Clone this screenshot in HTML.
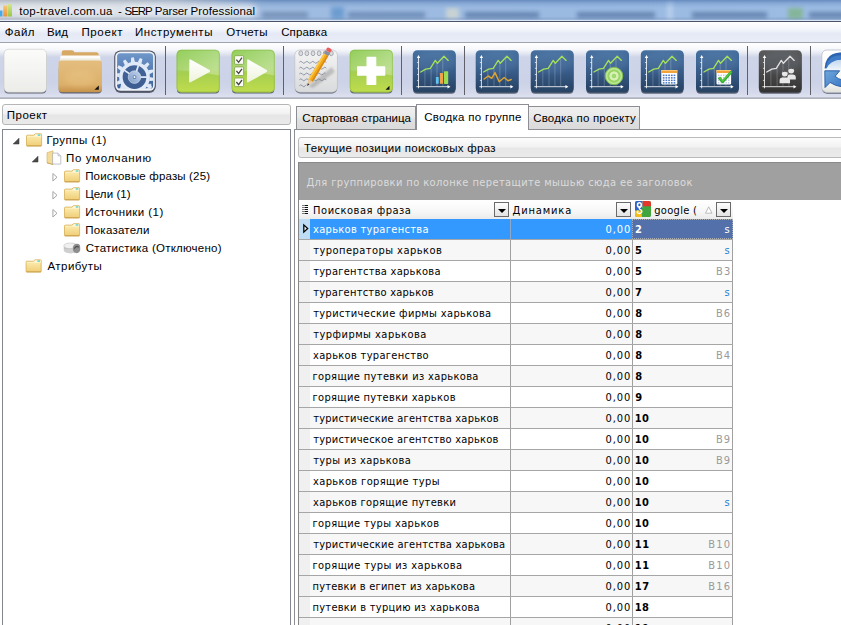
<!DOCTYPE html>
<html lang="ru"><head><meta charset="utf-8"><title>SERP Parser Professional</title>
<style>
html,body{margin:0;padding:0}
body{width:841px;height:625px;overflow:hidden;background:#fff;position:relative;font-family:'Liberation Sans',sans-serif;font-size:12px}
.a{position:absolute}
.t{position:absolute;white-space:pre;line-height:16px;height:16px;font-size:11.5px}
.d{font-family:'DejaVu Sans Condensed','DejaVu Sans','Liberation Sans',sans-serif;font-stretch:condensed;font-size:11px}
svg{position:absolute;overflow:visible}
.sep{position:absolute;top:46px;width:1px;height:49px;background:#5f6068}
</style></head>
<body>
<div class="a" id="title" style="left:0;top:0;width:841px;height:21px;overflow:hidden;background:linear-gradient(90deg,#c3c9d2 0,#bfc8d4 120px,#b1c1d8 200px,#9fbbe0 262px,#9bbae2 560px,#9dbce3 841px)">
<div class="a" style="left:-20px;top:3px;width:276px;height:14px;border-radius:8px;background:#eef1f5;opacity:.7;filter:blur(3.5px)"></div>
<div class="a" style="left:262px;top:12px;width:46px;height:6px;background:#5d789e;opacity:0.6;filter:blur(2px)"></div>
<div class="a" style="left:331px;top:7px;width:13px;height:12px;background:#4d8ac6;opacity:0.6;filter:blur(2px)"></div>
<div class="a" style="left:348px;top:12px;width:77px;height:6px;background:#52729e;opacity:0.6;filter:blur(2px)"></div>
<div class="a" style="left:446px;top:8px;width:13px;height:11px;background:#e6e2cc;opacity:0.6;filter:blur(2px)"></div>
<div class="a" style="left:465px;top:12px;width:74px;height:6px;background:#4a6a98;opacity:0.65;filter:blur(2px)"></div>
<div class="a" style="left:577px;top:12px;width:78px;height:6px;background:#4a6a98;opacity:0.65;filter:blur(2px)"></div>
<div class="a" style="left:667px;top:0px;width:6px;height:21px;background:#cfe0f6;opacity:0.5;filter:blur(2px)"></div>
<div class="a" style="left:692px;top:12px;width:75px;height:6px;background:#4a6a98;opacity:0.65;filter:blur(2px)"></div>
<div class="a" style="left:788px;top:8px;width:15px;height:11px;background:#7fb487;opacity:0.8;filter:blur(2px)"></div>
<div class="a" style="left:809px;top:12px;width:40px;height:6px;background:#4a6a98;opacity:0.65;filter:blur(2px)"></div>
<div class="a" style="left:0;top:0;width:841px;height:21px;background:linear-gradient(180deg,rgba(70,80,100,.16) 0,rgba(70,80,100,.06) 12%,rgba(255,255,255,0) 26%,rgba(255,255,255,0) 78%,rgba(40,60,100,.14) 92%,rgba(238,244,255,.7) 96%,rgba(238,244,255,.8) 100%)"></div>
<div class="a" style="left:170px;top:0;width:671px;height:8px;-webkit-mask-image:linear-gradient(90deg,transparent 0,#000 100px);mask-image:linear-gradient(90deg,transparent 0,#000 100px);background:linear-gradient(180deg,rgba(50,100,170,.42) 0,rgba(60,110,180,.2) 40%,rgba(60,110,180,0) 100%)"></div>
</div>
<svg style="left:0;top:3px" width="14" height="16" viewBox="0 3 14 16"><defs><linearGradient id="bo" x1="0" y1="0" x2="0" y2="1"><stop offset="0" stop-color="#f8c874"/><stop offset="1" stop-color="#e8943a"/></linearGradient><linearGradient id="bg" x1="0" y1="0" x2="0" y2="1"><stop offset="0" stop-color="#d2e88e"/><stop offset="1" stop-color="#9cc44a"/></linearGradient></defs><rect x="-1" y="10.5" width="3.5" height="6" fill="#4ea6e2"/><rect x="3.2" y="5.5" width="4.3" height="11" rx=".6" fill="url(#bo)"/><rect x="8" y="4" width="4" height="12.5" rx=".6" fill="url(#bg)"/></svg>
<span class="t" style="left:19.2px;top:3px;color:#000;letter-spacing:0.28px;text-shadow:0 0 4px rgba(255,255,255,.9),0 0 9px rgba(255,255,255,.8);">top-travel.com.ua</span>
<span class="t" style="left:117.9px;top:3px;color:#000;text-shadow:0 0 4px rgba(255,255,255,.9),0 0 9px rgba(255,255,255,.8);">-</span>
<span class="t" style="left:124.6px;top:3px;color:#000;letter-spacing:-1.05px;text-shadow:0 0 4px rgba(255,255,255,.9),0 0 9px rgba(255,255,255,.8);">SERP</span>
<span class="t" style="left:154.8px;top:3px;color:#000;letter-spacing:-0.17px;text-shadow:0 0 4px rgba(255,255,255,.9),0 0 9px rgba(255,255,255,.8);">Parser</span>
<span class="t" style="left:190.4px;top:3px;color:#000;letter-spacing:0.13px;text-shadow:0 0 4px rgba(255,255,255,.9),0 0 9px rgba(255,255,255,.8);">Professional</span>
<div class="a" style="left:0;top:21px;width:841px;height:1px;background:#4a5468"></div>
<div class="a" style="left:0;top:22px;width:841px;height:20px;background:linear-gradient(180deg,#ffffff 0,#f4f6fb 35%,#e4e9f5 60%,#e9edf7 100%)"></div>
<span class="t" style="left:4.8px;top:24px;color:#000;letter-spacing:0.48px;">Файл</span>
<span class="t" style="left:47.0px;top:24px;color:#000;letter-spacing:0.12px;">Вид</span>
<span class="t" style="left:81.4px;top:24px;color:#000;letter-spacing:0.65px;">Проект</span>
<span class="t" style="left:135.0px;top:24px;color:#000;letter-spacing:0.57px;">Инструменты</span>
<span class="t" style="left:226.2px;top:24px;color:#000;letter-spacing:0.30px;">Отчеты</span>
<span class="t" style="left:281.2px;top:24px;color:#000;letter-spacing:0.13px;">Справка</span>
<div class="a" style="left:0;top:42px;width:841px;height:1px;background:#a0a3ad"></div>
<div class="a" style="left:0;top:43px;width:841px;height:54px;background:linear-gradient(180deg,#ffffff 0,#f6f7fb 12%,#e8ebf4 18%,#cfd5e9 26%,#ccd2e7 70%,#d3d8ea 90%,#dde1ef 100%)"></div>
<div class="a" style="left:0;top:97px;width:841px;height:1px;background:#bcc0cd"></div>
<div class="a" style="left:0;top:98px;width:841px;height:1px;background:#b0b3bf"></div>
<div class="sep" style="left:165px"></div>
<div class="sep" style="left:283px"></div>
<div class="sep" style="left:401px"></div>
<div class="sep" style="left:464px"></div>
<div class="sep" style="left:747px"></div>
<div class="sep" style="left:810px"></div>
<svg style="left:0;top:43px" width="841" height="55" viewBox="0 43 841 55">
<defs>
<linearGradient id="gW" x1="0" y1="0" x2="0" y2="1"><stop offset="0" stop-color="#fbfbfa"/><stop offset="1" stop-color="#ecece9"/></linearGradient>
<linearGradient id="gF" x1="0" y1="0" x2="0" y2="1"><stop offset="0" stop-color="#e4bd7e"/><stop offset=".75" stop-color="#dcb06a"/><stop offset="1" stop-color="#c6924a"/></linearGradient>
<linearGradient id="gG" x1="0" y1="0" x2="0" y2="1"><stop offset="0" stop-color="#90cd58"/><stop offset=".45" stop-color="#a3d264"/><stop offset=".55" stop-color="#a6cf50"/><stop offset="1" stop-color="#c0dc4c"/></linearGradient>
<linearGradient id="gGloss" x1="0" y1="0" x2="1" y2=".3"><stop offset="0" stop-color="#fff" stop-opacity=".02"/><stop offset="1" stop-color="#fff" stop-opacity=".28"/></linearGradient>
<linearGradient id="gB" x1="0" y1="0" x2="0" y2="1"><stop offset="0" stop-color="#46709f"/><stop offset=".5" stop-color="#385c89"/><stop offset=".85" stop-color="#2b486c"/><stop offset="1" stop-color="#284464"/></linearGradient>
<linearGradient id="gW2" x1="0" y1="0" x2="0" y2="1"><stop offset="0" stop-color="#ffffff"/><stop offset=".8" stop-color="#f6f6f4"/><stop offset="1" stop-color="#dedfda"/></linearGradient>
<linearGradient id="gGlass" x1="0" y1="0" x2="0" y2="1"><stop offset="0" stop-color="#9fc0e6"/><stop offset="1" stop-color="#f2f7fc"/></linearGradient>
<linearGradient id="gArr" x1="0" y1="0" x2="1" y2="1"><stop offset="0" stop-color="#6fa6dc"/><stop offset="1" stop-color="#3a78c4"/></linearGradient>
<linearGradient id="gK" x1="0" y1="0" x2="0" y2="1"><stop offset="0" stop-color="#5a5a5a"/><stop offset=".5" stop-color="#4a4a4a"/><stop offset="1" stop-color="#333"/></linearGradient>
<linearGradient id="gGear" x1="0" y1="0" x2="0" y2="1"><stop offset="0" stop-color="#6f97c9"/><stop offset="1" stop-color="#3c6099"/></linearGradient>
<linearGradient id="gHub" x1="1" y1="0" x2="0" y2="1"><stop offset="0" stop-color="#c3d4ec"/><stop offset="1" stop-color="#7f9cc8"/></linearGradient>
<linearGradient id="gTri" x1="0" y1="0" x2="0" y2="1"><stop offset="0" stop-color="#ffffff"/><stop offset="1" stop-color="#eef3dc"/></linearGradient>
<linearGradient id="gN" x1="0" y1="0" x2="0" y2="1"><stop offset="0" stop-color="#f4f4f4"/><stop offset="1" stop-color="#d9dadb"/></linearGradient>
<radialGradient id="gTarget"><stop offset="0" stop-color="#a8de78"/><stop offset=".2" stop-color="#9ad866"/><stop offset=".3" stop-color="#d6f0b8"/><stop offset=".48" stop-color="#d6f0b8"/><stop offset=".56" stop-color="#98d562"/><stop offset=".7" stop-color="#98d562"/><stop offset=".8" stop-color="#c4e99c"/><stop offset="1" stop-color="#a6dc74"/></radialGradient>
<filter id="sh2" x="-30%" y="-30%" width="160%" height="160%"><feGaussianBlur stdDeviation="2.5"/></filter>
<filter id="sh3" x="-30%" y="-30%" width="160%" height="160%"><feGaussianBlur stdDeviation="1.3"/></filter>
<filter id="sh" x="-10%" y="-10%" width="120%" height="130%"><feGaussianBlur stdDeviation=".7"/></filter>
<g id="axes"><path d="M5.7 38.3V7M3.6 36.7H35.5" stroke="#fff" stroke-width=".9" fill="none" opacity=".92"/><path d="M5.7 4.9l-1.7 3h3.4zM37.7 36.7l-3-1.7v3.4z" fill="#fff"/><path d="M12.1 36V20M18.3 36V18.5M24.2 36V13M30 36V8" stroke="#fff" stroke-width=".8" opacity=".25"/><path d="M4.2 12.5h1.5M4.2 18.3h1.5M4.2 24.5h1.5M4.2 30.4h1.5" stroke="#fff" stroke-width=".8" opacity=".85"/></g>
<path id="gline" d="M7.9 22L12.9 19.1 17.5 18.3 22.5 10.4 24.6 13.3 31.2 6.2 35.4 10.4" fill="none" stroke-width="1.35" stroke-linejoin="round" stroke-linecap="round"/>
</defs>
<rect x="4.3" y="50.5" width="41.9" height="43" rx="4" fill="#2e3446" opacity=".7" filter="url(#sh)"/>
<rect x="4" y="49.3" width="42.5" height="43" rx="4.5" fill="url(#gW)" stroke="#c9c9c6" stroke-width=".6"/>
<rect x="58.8" y="65.2" width="42.9" height="28.2" rx="4" fill="#2e3446" opacity=".7" filter="url(#sh)"/>
<path d="M61.7 56V52.5Q61.7 50.2 63.9 50.2H71.8Q73.8 50.2 74.4 52.2H96.5Q98.7 52.4 98.7 54.5V62H61.7z" fill="#d7a964"/>
<rect x="60.3" y="55.6" width="40" height="7" rx="1.6" fill="#fdfcf9"/>
<rect x="60.3" y="58.4" width="40" height="3" fill="#eeebe3"/>
<path d="M58.5 63Q58.5 60.4 61.1 60.4H99.4Q102.0 60.4 102.0 63V88.6Q102.0 92.3 98.3 92.3H62.2Q58.5 92.3 58.5 88.6z" fill="url(#gF)"/>
<ellipse cx="80.0" cy="78" rx="15" ry="8" fill="#ecc88c" opacity=".35" filter="url(#sh2)"/>
<path d="M98.8 85.4v4.4h-4.4z" fill="#111"/>
<rect x="114.6" y="51.6" width="40.9" height="41.3" rx="6" fill="#2e3446" opacity=".7" filter="url(#sh)"/>
<rect x="114.3" y="50.4" width="41.5" height="41.3" rx="6" fill="#4d5363"/>
<rect x="115.3" y="51.4" width="39.5" height="39.3" rx="5.2" fill="#eef2f8"/>
<rect x="117.1" y="53.2" width="36" height="35.8" rx="3.4" fill="url(#gGear)"/>
<clipPath id="cg"><rect x="117.1" y="53.2" width="36" height="35.8" rx="3.4"/></clipPath><g clip-path="url(#cg)">
<g transform="translate(120.3,97)"><path d="M-1.49 -8.60L-1.01 -12.80H1.01L1.49 -8.60z" fill="#d3dff1" transform="rotate(8.0)"/><path d="M-1.49 -8.60L-1.01 -12.80H1.01L1.49 -8.60z" fill="#d3dff1" transform="rotate(40.7)"/><path d="M-1.49 -8.60L-1.01 -12.80H1.01L1.49 -8.60z" fill="#d3dff1" transform="rotate(73.5)"/><path d="M-1.49 -8.60L-1.01 -12.80H1.01L1.49 -8.60z" fill="#d3dff1" transform="rotate(106.2)"/><path d="M-1.49 -8.60L-1.01 -12.80H1.01L1.49 -8.60z" fill="#d3dff1" transform="rotate(138.9)"/><path d="M-1.49 -8.60L-1.01 -12.80H1.01L1.49 -8.60z" fill="#d3dff1" transform="rotate(171.6)"/><path d="M-1.49 -8.60L-1.01 -12.80H1.01L1.49 -8.60z" fill="#d3dff1" transform="rotate(204.4)"/><path d="M-1.49 -8.60L-1.01 -12.80H1.01L1.49 -8.60z" fill="#d3dff1" transform="rotate(237.1)"/><path d="M-1.49 -8.60L-1.01 -12.80H1.01L1.49 -8.60z" fill="#d3dff1" transform="rotate(269.8)"/><path d="M-1.49 -8.60L-1.01 -12.80H1.01L1.49 -8.60z" fill="#d3dff1" transform="rotate(302.5)"/><path d="M-1.49 -8.60L-1.01 -12.80H1.01L1.49 -8.60z" fill="#d3dff1" transform="rotate(335.3)"/><circle r="8.00" fill="none" stroke="#d3dff1" stroke-width="2.00"/></g>
<g transform="translate(149.8,96.5)"><path d="M-1.49 -8.60L-1.01 -12.80H1.01L1.49 -8.60z" fill="#d3dff1" transform="rotate(2.0)"/><path d="M-1.49 -8.60L-1.01 -12.80H1.01L1.49 -8.60z" fill="#d3dff1" transform="rotate(34.7)"/><path d="M-1.49 -8.60L-1.01 -12.80H1.01L1.49 -8.60z" fill="#d3dff1" transform="rotate(67.5)"/><path d="M-1.49 -8.60L-1.01 -12.80H1.01L1.49 -8.60z" fill="#d3dff1" transform="rotate(100.2)"/><path d="M-1.49 -8.60L-1.01 -12.80H1.01L1.49 -8.60z" fill="#d3dff1" transform="rotate(132.9)"/><path d="M-1.49 -8.60L-1.01 -12.80H1.01L1.49 -8.60z" fill="#d3dff1" transform="rotate(165.6)"/><path d="M-1.49 -8.60L-1.01 -12.80H1.01L1.49 -8.60z" fill="#d3dff1" transform="rotate(198.4)"/><path d="M-1.49 -8.60L-1.01 -12.80H1.01L1.49 -8.60z" fill="#d3dff1" transform="rotate(231.1)"/><path d="M-1.49 -8.60L-1.01 -12.80H1.01L1.49 -8.60z" fill="#d3dff1" transform="rotate(263.8)"/><path d="M-1.49 -8.60L-1.01 -12.80H1.01L1.49 -8.60z" fill="#d3dff1" transform="rotate(296.5)"/><path d="M-1.49 -8.60L-1.01 -12.80H1.01L1.49 -8.60z" fill="#d3dff1" transform="rotate(329.3)"/><circle r="8.00" fill="none" stroke="#d3dff1" stroke-width="2.00"/></g>
<circle cx="134.5" cy="77.1" r="12.2" fill="#3d5d90" opacity=".8"/>
<g transform="translate(134.5,77.1)"><path d="M-2.00 -15.00L-1.36 -19.70H1.36L2.00 -15.00z" fill="#dfe9f7" transform="rotate(-6.0)"/><path d="M-2.00 -15.00L-1.36 -19.70H1.36L2.00 -15.00z" fill="#dfe9f7" transform="rotate(19.7)"/><path d="M-2.00 -15.00L-1.36 -19.70H1.36L2.00 -15.00z" fill="#dfe9f7" transform="rotate(45.4)"/><path d="M-2.00 -15.00L-1.36 -19.70H1.36L2.00 -15.00z" fill="#dfe9f7" transform="rotate(71.1)"/><path d="M-2.00 -15.00L-1.36 -19.70H1.36L2.00 -15.00z" fill="#dfe9f7" transform="rotate(96.9)"/><path d="M-2.00 -15.00L-1.36 -19.70H1.36L2.00 -15.00z" fill="#dfe9f7" transform="rotate(122.6)"/><path d="M-2.00 -15.00L-1.36 -19.70H1.36L2.00 -15.00z" fill="#dfe9f7" transform="rotate(148.3)"/><path d="M-2.00 -15.00L-1.36 -19.70H1.36L2.00 -15.00z" fill="#dfe9f7" transform="rotate(174.0)"/><path d="M-2.00 -15.00L-1.36 -19.70H1.36L2.00 -15.00z" fill="#dfe9f7" transform="rotate(199.7)"/><path d="M-2.00 -15.00L-1.36 -19.70H1.36L2.00 -15.00z" fill="#dfe9f7" transform="rotate(225.4)"/><path d="M-2.00 -15.00L-1.36 -19.70H1.36L2.00 -15.00z" fill="#dfe9f7" transform="rotate(251.1)"/><path d="M-2.00 -15.00L-1.36 -19.70H1.36L2.00 -15.00z" fill="#dfe9f7" transform="rotate(276.9)"/><path d="M-2.00 -15.00L-1.36 -19.70H1.36L2.00 -15.00z" fill="#dfe9f7" transform="rotate(302.6)"/><path d="M-2.00 -15.00L-1.36 -19.70H1.36L2.00 -15.00z" fill="#dfe9f7" transform="rotate(328.3)"/><circle r="13.65" fill="none" stroke="#dfe9f7" stroke-width="3.50"/></g>
<rect x="133.65" y="64.6" width="1.7" height="9" fill="#e4ecf8" transform="rotate(18.5 134.5 77.1)"/>
<rect x="133.65" y="64.6" width="1.7" height="9" fill="#e4ecf8" transform="rotate(90 134.5 77.1)"/>
<rect x="133.65" y="64.6" width="1.7" height="9" fill="#e4ecf8" transform="rotate(304 134.5 77.1)"/>
<circle cx="134.5" cy="77.1" r="6.3" fill="url(#gHub)"/><circle cx="134.5" cy="77.1" r="6.3" fill="none" stroke="#c9d8ee" stroke-width=".7"/><circle cx="134.5" cy="77.1" r="1.9" fill="#5878a8"/><circle cx="134.5" cy="77.1" r="1.1" fill="#eef3fa"/>
</g>
<rect x="176.9" y="51.0" width="42.4" height="42.6" rx="4" fill="#2e3446" opacity=".7" filter="url(#sh)"/><rect x="176.6" y="49.8" width="43.2" height="42.6" rx="4.5" fill="url(#gG)"/><path d="M176.6 54.3Q176.6 49.8 181.1 49.8H215.3Q219.8 49.8 219.8 54.3V75.5Q198.6 71.5 176.6 70z" fill="url(#gGloss)"/><rect x="177.1" y="50.3" width="42.2" height="41.6" rx="4" fill="none" stroke="#86b83c" stroke-width="1" opacity=".5"/>
<path d="M189.4 60.3Q188.79999999999998 59 190.6 59.6L209.6 70Q210.8 71 209.6 72L190.6 82.3Q189.0 82.8 189.1 81.5z" fill="url(#gTri)"/>
<rect x="231.9" y="51.0" width="42.4" height="42.6" rx="4" fill="#2e3446" opacity=".7" filter="url(#sh)"/><rect x="231.6" y="49.8" width="43.2" height="42.6" rx="4.5" fill="url(#gG)"/><path d="M231.6 54.3Q231.6 49.8 236.1 49.8H270.3Q274.8 49.8 274.8 54.3V75.5Q253.6 71.5 231.6 70z" fill="url(#gGloss)"/><rect x="232.1" y="50.3" width="42.2" height="41.6" rx="4" fill="none" stroke="#86b83c" stroke-width="1" opacity=".5"/>
<rect x="234.6" y="55.7" width="9" height="8.6" rx="1" fill="#fbfdf5" stroke="#7f9f4a" stroke-width=".8"/>
<path d="M236.4 59.7l2.2 2.6 3.4-4.6" fill="none" stroke="#444" stroke-width="1.3"/>
<rect x="234.6" y="66.9" width="9" height="8.6" rx="1" fill="#fbfdf5" stroke="#7f9f4a" stroke-width=".8"/>
<path d="M236.4 70.9l2.2 2.6 3.4-4.6" fill="none" stroke="#444" stroke-width="1.3"/>
<rect x="234.6" y="78" width="9" height="8.6" rx="1" fill="#fbfdf5" stroke="#7f9f4a" stroke-width=".8"/>
<path d="M236.4 82l2.2 2.6 3.4-4.6" fill="none" stroke="#444" stroke-width="1.3"/>
<path d="M247.2 60.3Q246.6 59 248.4 59.6L266.6 70Q267.8 71 266.6 72L248.4 82.3Q246.79999999999998 82.8 246.9 81.5z" fill="url(#gTri)"/>
<rect x="295.1" y="51.2" width="42.0" height="42.3" rx="5" fill="#2e3446" opacity=".7" filter="url(#sh)"/>
<rect x="294.8" y="50" width="42.6" height="42.3" rx="5" fill="url(#gN)" stroke="#b9babd" stroke-width=".6"/>
<ellipse cx="300.8" cy="53.3" rx="1.9" ry="2.4" fill="#dcdee2" stroke="#9da0a9" stroke-width=".9"/>
<ellipse cx="306.90000000000003" cy="53.3" rx="1.9" ry="2.4" fill="#dcdee2" stroke="#9da0a9" stroke-width=".9"/>
<ellipse cx="313.0" cy="53.3" rx="1.9" ry="2.4" fill="#dcdee2" stroke="#9da0a9" stroke-width=".9"/>
<ellipse cx="319.1" cy="53.3" rx="1.9" ry="2.4" fill="#dcdee2" stroke="#9da0a9" stroke-width=".9"/>
<ellipse cx="325.2" cy="53.3" rx="1.9" ry="2.4" fill="#dcdee2" stroke="#9da0a9" stroke-width=".9"/>
<ellipse cx="331.3" cy="53.3" rx="1.9" ry="2.4" fill="#dcdee2" stroke="#9da0a9" stroke-width=".9"/>
<path d="M299.3 62.3q1.5-2 3 0t3 0 3 0 3 0 3 0 3 0 3 0 3 0 3 0" fill="none" stroke="#6f7890" stroke-width=".8" opacity=".9" stroke-dasharray="34.5 100"/>
<path d="M299.3 68.2q1.5-2 3 0t3 0 3 0 3 0 3 0 3 0 3 0 3 0 3 0" fill="none" stroke="#6f7890" stroke-width=".8" opacity=".9" stroke-dasharray="32.5 100"/>
<path d="M299.3 74q1.5-2 3 0t3 0 3 0 3 0 3 0 3 0 3 0 3 0 3 0" fill="none" stroke="#6f7890" stroke-width=".8" opacity=".9" stroke-dasharray="31.5 100"/>
<path d="M299.3 79.8q1.5-2 3 0t3 0 3 0 3 0 3 0 3 0 3 0 3 0 3 0" fill="none" stroke="#6f7890" stroke-width=".8" opacity=".9" stroke-dasharray="34.5 100"/>
<path d="M299.3 85.8q1.5-2 3 0t3 0 3 0 3 0 3 0 3 0 3 0 3 0 3 0" fill="none" stroke="#6f7890" stroke-width=".8" opacity=".9" stroke-dasharray="8.5 100"/>
<path d="M308.8 86L331.8 67L334.8 72L312.8 88z" fill="#666" opacity=".32" filter="url(#sh3)"/>
<g transform="translate(307.3,85.9) rotate(-59)"><path d="M0 0L6.5 -2.6V2.6z" fill="#e9c9a0"/><path d="M0 0L2.4 -1V1z" fill="#222"/><rect x="6.5" y="-2.6" width="30" height="5.2" fill="#f4a91c"/><rect x="6.5" y="-2.6" width="30" height="1.7" fill="#fbc94a"/><rect x="6.5" y="1" width="30" height="1.6" fill="#d98a10"/><rect x="36.5" y="-2.7" width="3.6" height="5.4" fill="#8a8f98"/><rect x="40.1" y="-2.7" width="3.8" height="5.4" rx="1.6" fill="#e85c5c"/></g>
<rect x="350.0" y="51.0" width="42.4" height="42.6" rx="4" fill="#2e3446" opacity=".7" filter="url(#sh)"/><rect x="349.7" y="49.8" width="43.2" height="42.6" rx="4.5" fill="url(#gG)"/><path d="M349.7 54.3Q349.7 49.8 354.2 49.8H388.4Q392.9 49.8 392.9 54.3V75.5Q371.7 71.5 349.7 70z" fill="url(#gGloss)"/><rect x="350.2" y="50.3" width="42.2" height="41.6" rx="4" fill="none" stroke="#86b83c" stroke-width="1" opacity=".5"/>
<path d="M366.5 57.4Q366.5 56.8 367.2 56.8H375.7Q376.3 56.8 376.3 57.4V66.2H384.7Q385.3 66.2 385.3 67V75Q385.3 75.7 384.7 75.7H376.3V84.4Q376.3 85 375.7 85H367.2Q366.5 85 366.5 84.4V75.7H357.7Q357.0 75.7 357.0 75V67Q357.0 66.2 357.7 66.2H366.5z" fill="#fff"/>
<path d="M389.5 85.8v4h-4z" fill="#111"/>
<rect x="413.1" y="51.400000000000006" width="42.4" height="42.3" rx="4" fill="#2e3446" opacity=".7" filter="url(#sh)"/><rect x="412.8" y="50.2" width="43" height="42.3" rx="4.5" fill="url(#gB)"/><ellipse cx="434.8" cy="62" rx="20" ry="11" fill="#9cc0ea" opacity=".10" filter="url(#sh2)"/><g transform="translate(412.8,50)"><use href="#axes"/><use href="#gline" stroke="#a4e05a"/><rect x="23.1" y="27" width="2.8" height="6.8" rx=".6" fill="#5fc4f2"/><rect x="27.1" y="22.9" width="3.1" height="10.9" rx=".6" fill="#f2a34a"/><rect x="31.2" y="21.2" width="4.2" height="12.7" rx=".6" fill="#9bdc52"/></g>
<rect x="476.0" y="51.400000000000006" width="42.4" height="42.3" rx="4" fill="#2e3446" opacity=".7" filter="url(#sh)"/><rect x="475.7" y="50.2" width="43" height="42.3" rx="4.5" fill="url(#gB)"/><ellipse cx="497.7" cy="62" rx="20" ry="11" fill="#9cc0ea" opacity=".10" filter="url(#sh2)"/><g transform="translate(475.7,50)"><use href="#axes"/><use href="#gline" stroke="#a4e05a"/><path d="M8.5 29L12.5 26 16 28.3 19.3 22.6 23.5 31.8 28.5 27.5 32.3 30.8 35.5 29.5" fill="none" stroke="#dba236" stroke-width="1.5" stroke-linejoin="round" stroke-linecap="round"/></g>
<rect x="531.0" y="51.400000000000006" width="42.4" height="42.3" rx="4" fill="#2e3446" opacity=".7" filter="url(#sh)"/><rect x="530.7" y="50.2" width="43" height="42.3" rx="4.5" fill="url(#gB)"/><ellipse cx="552.7" cy="62" rx="20" ry="11" fill="#9cc0ea" opacity=".10" filter="url(#sh2)"/><g transform="translate(530.7,50)"><use href="#axes"/><use href="#gline" stroke="#a4e05a"/></g>
<rect x="586.3" y="51.400000000000006" width="42.4" height="42.3" rx="4" fill="#2e3446" opacity=".7" filter="url(#sh)"/><rect x="586" y="50.2" width="43" height="42.3" rx="4.5" fill="url(#gB)"/><ellipse cx="608" cy="62" rx="20" ry="11" fill="#9cc0ea" opacity=".10" filter="url(#sh2)"/><g transform="translate(586,50)"><use href="#axes"/><use href="#gline" stroke="#a4e05a"/><circle cx="28" cy="26" r="8.8" fill="url(#gTarget)"/><circle cx="28" cy="26" r="8.8" fill="none" stroke="#7fc24a" stroke-width=".8"/></g>
<rect x="641.0999999999999" y="51.400000000000006" width="42.4" height="42.3" rx="4" fill="#2e3446" opacity=".7" filter="url(#sh)"/><rect x="640.8" y="50.2" width="43" height="42.3" rx="4.5" fill="url(#gB)"/><ellipse cx="662.8" cy="62" rx="20" ry="11" fill="#9cc0ea" opacity=".10" filter="url(#sh2)"/><g transform="translate(640.8,50)"><use href="#axes"/><use href="#gline" stroke="#a4e05a"/><rect x="20.5" y="20" width="16" height="14.4" rx=".8" fill="#fff"/><rect x="20.5" y="20" width="16" height="3" fill="#f2a23a"/><rect x="20.5" y="20" width="16" height="1" fill="#f8c878"/><rect x="22.0" y="24.6" width="1.7" height="1.5" fill="#4a78c8"/><rect x="22.0" y="27.1" width="1.7" height="1.5" fill="#4a78c8"/><rect x="22.0" y="29.6" width="1.7" height="1.5" fill="#4a78c8"/><rect x="22.0" y="32.1" width="1.7" height="1.5" fill="#4a78c8"/><rect x="24.7" y="24.6" width="1.7" height="1.5" fill="#4a78c8"/><rect x="24.7" y="27.1" width="1.7" height="1.5" fill="#4a78c8"/><rect x="24.7" y="29.6" width="1.7" height="1.5" fill="#4a78c8"/><rect x="24.7" y="32.1" width="1.7" height="1.5" fill="#4a78c8"/><rect x="27.4" y="24.6" width="1.7" height="1.5" fill="#4a78c8"/><rect x="27.4" y="27.1" width="1.7" height="1.5" fill="#4a78c8"/><rect x="27.4" y="29.6" width="1.7" height="1.5" fill="#4a78c8"/><rect x="27.4" y="32.1" width="1.7" height="1.5" fill="#4a78c8"/><rect x="30.1" y="24.6" width="1.7" height="1.5" fill="#4a78c8"/><rect x="30.1" y="27.1" width="1.7" height="1.5" fill="#4a78c8"/><rect x="30.1" y="29.6" width="1.7" height="1.5" fill="#4a78c8"/><rect x="30.1" y="32.1" width="1.7" height="1.5" fill="#4a78c8"/><rect x="32.8" y="24.6" width="1.7" height="1.5" fill="#4a78c8"/><rect x="32.8" y="27.1" width="1.7" height="1.5" fill="#4a78c8"/><rect x="32.8" y="29.6" width="1.7" height="1.5" fill="#4a78c8"/><rect x="32.8" y="32.1" width="1.7" height="1.5" fill="#4a78c8"/></g>
<rect x="696.3" y="51.400000000000006" width="42.4" height="42.3" rx="4" fill="#2e3446" opacity=".7" filter="url(#sh)"/><rect x="696" y="50.2" width="43" height="42.3" rx="4.5" fill="url(#gB)"/><ellipse cx="718" cy="62" rx="20" ry="11" fill="#9cc0ea" opacity=".10" filter="url(#sh2)"/><g transform="translate(696,50)"><use href="#axes"/><use href="#gline" stroke="#a4e05a"/><rect x="20.5" y="20" width="14.6" height="14.4" rx=".8" fill="#fff"/><rect x="20.5" y="20" width="14.6" height="3" fill="#f2a23a"/><rect x="20.5" y="20" width="14.6" height="1" fill="#f8c878"/><rect x="22.0" y="24.6" width="1.4" height="1.4" fill="#b9c8e0"/><rect x="22.0" y="27.1" width="1.4" height="1.4" fill="#b9c8e0"/><rect x="22.0" y="29.6" width="1.4" height="1.4" fill="#b9c8e0"/><rect x="22.0" y="32.1" width="1.4" height="1.4" fill="#b9c8e0"/><rect x="24.5" y="24.6" width="1.4" height="1.4" fill="#b9c8e0"/><rect x="24.5" y="27.1" width="1.4" height="1.4" fill="#b9c8e0"/><rect x="24.5" y="29.6" width="1.4" height="1.4" fill="#b9c8e0"/><rect x="24.5" y="32.1" width="1.4" height="1.4" fill="#b9c8e0"/><rect x="27.0" y="24.6" width="1.4" height="1.4" fill="#b9c8e0"/><rect x="27.0" y="27.1" width="1.4" height="1.4" fill="#b9c8e0"/><rect x="27.0" y="29.6" width="1.4" height="1.4" fill="#b9c8e0"/><rect x="27.0" y="32.1" width="1.4" height="1.4" fill="#b9c8e0"/><rect x="29.5" y="24.6" width="1.4" height="1.4" fill="#b9c8e0"/><rect x="29.5" y="27.1" width="1.4" height="1.4" fill="#b9c8e0"/><rect x="29.5" y="29.6" width="1.4" height="1.4" fill="#b9c8e0"/><rect x="29.5" y="32.1" width="1.4" height="1.4" fill="#b9c8e0"/><rect x="32.0" y="24.6" width="1.4" height="1.4" fill="#b9c8e0"/><rect x="32.0" y="27.1" width="1.4" height="1.4" fill="#b9c8e0"/><rect x="32.0" y="29.6" width="1.4" height="1.4" fill="#b9c8e0"/><rect x="32.0" y="32.1" width="1.4" height="1.4" fill="#b9c8e0"/><path d="M23 27.5l3.6 4.3L35.5 21.6" fill="none" stroke="#2faa2f" stroke-width="2.8" stroke-linejoin="round"/><path d="M23 27.2l3.6 4.0L35.3 21.6" fill="none" stroke="#55cc3f" stroke-width="1.2" stroke-linejoin="round"/></g>
<rect x="759.0999999999999" y="51.400000000000006" width="42.4" height="42.3" rx="4" fill="#2e3446" opacity=".7" filter="url(#sh)"/><rect x="758.8" y="50.2" width="43" height="42.3" rx="4.5" fill="url(#gK)"/><ellipse cx="780.8" cy="62" rx="20" ry="11" fill="#9cc0ea" opacity=".10" filter="url(#sh2)"/><g transform="translate(758.8,50)"><use href="#axes"/><use href="#gline" stroke="#e0e0e0"/><g fill="#e8e8e8"><circle cx="26" cy="23.5" r="2.9"/><path d="M20.8 33.2v-3.2q0-2.3 2.6-2.6h5.2q2.6.3 2.6 2.6v3.2z"/><circle cx="32.4" cy="20.6" r="2.9"/><path d="M28.6 29.6v-2.6q0-2.3 2.2-2.6h3.6q2.6.3 2.6 2.6v2.6z"/></g><g fill="#555"><path d="M23.2 22.4q.4-2.6 2.8-2.6t2.8 2.6q-2.8-1.4-5.6 0z"/><path d="M29.6 19.5q.4-2.6 2.8-2.6t2.8 2.6q-2.8-1.4-5.6 0z"/></g></g>
<rect x="822.0999999999999" y="51.2" width="42.4" height="42.5" rx="5" fill="#2e3446" opacity=".7" filter="url(#sh)"/>
<rect x="821.8" y="50" width="43" height="42.5" rx="5" fill="url(#gW2)" stroke="#b9bec9" stroke-width=".8"/>
<path d="M824.7 68.2Q825.3 57.5 832.5 54.2Q837 52.3 843 52.5V70.5H826z" fill="url(#gGlass)"/>
<path d="M824.6 68.3Q825.2 57.5 832.5 54.2Q837 52.3 843 52.5V59.6Q836 59.4 831.5 62.3Q827.6 65 826.3 68.6z" fill="#2d64b0"/>
<path d="M826.2 66.5Q827.4 59.5 833 56.8Q837 55.2 843 55.3V59.6Q836 59.4 831.5 62.3Q827.6 65 826.3 68.6z" fill="#3f7cc7"/>
<path d="M824.8 70.8H839.7L835.1 76.3Q838 79 843 80.3V87Q835 86 830.1 82.5L825 87.6z" fill="url(#gArr)" stroke="#2559a6" stroke-width=".9" stroke-linejoin="round"/>
</svg>
<div class="a" style="left:2px;top:104px;width:287px;height:19px;border:1px solid #b6b6b6;border-radius:3px;background:linear-gradient(180deg,#fcfcfc 0,#f1f1f1 46%,#e6e6e6 54%,#eaeaea 100%)"></div>
<span class="t" style="left:6.8px;top:107px;color:#000;letter-spacing:0.49px;">Проект</span>
<div class="a" style="left:2px;top:129px;width:287px;height:520px;border:1px solid #828790;background:#fff"></div>
<svg style="left:0;top:129px" width="292" height="160" viewBox="0 129 292 160">
<defs><linearGradient id="fy" x1="0" y1="0" x2="0" y2="1"><stop offset="0" stop-color="#fdf0b8"/><stop offset="1" stop-color="#f0cd76"/></linearGradient>
<g id="fold"><path d="M.5 2.6Q.5 1.8 1.3 1.8H7.8L9.4 .4H15Q15.6 .4 15.6 1V12Q15.6 12.7 14.9 12.7H1.2Q.5 12.7 .5 12z" fill="url(#fy)" stroke="#d6ae58" stroke-width=".8"/><path d="M8.8 1.9L9.9 1H15V2.9H8.8z" fill="#fffae4"/><rect x="11.7" y="1" width="2.7" height="1.4" fill="#58cdc4"/><path d="M1 3.1H15.2" stroke="#fff6cf" stroke-width=".7" opacity=".9"/><path d="M.9 12.4H15.3" stroke="#c59c48" stroke-width=".8"/></g>
<path id="exO" d="M.5 .5V8L4.6 4.25z" fill="#fff" stroke="#a6a6a6" stroke-width="1"/>
<path id="exC" d="M6 .2V6H.2z" fill="#4c4c4c" stroke="#2e2e2e" stroke-width=".5"/></defs>
<use href="#exC" x="13" y="138"/>
<use href="#fold" x="26" y="133.4"/>
<use href="#exC" x="32" y="156"/>
<g transform="translate(47,150.5)"><path d="M0 2.2L6 .3V14L0 12.3z" fill="#f4dc98" stroke="#d2b062" stroke-width=".6"/><path d="M5.6 2.6H11L13.8 5.4V13.6H5.6z" fill="#fdfdfd" stroke="#a8acb4" stroke-width=".7"/><path d="M11 2.6V5.4H13.8" fill="#e4e7ec" stroke="#a8acb4" stroke-width=".6"/><path d="M0 12.3L6 14" stroke="#c8a050" stroke-width=".8"/></g>
<use href="#exO" x="52.4" y="173"/>
<use href="#exO" x="52.4" y="191"/>
<use href="#exO" x="52.4" y="209"/>
<use href="#fold" x="64" y="169.3"/>
<use href="#fold" x="64" y="187.3"/>
<use href="#fold" x="64" y="205.3"/>
<use href="#fold" x="64" y="223.3"/>
<g transform="translate(63.8,242.6)"><path d="M0 3.2A6.6 2.8 0 0 1 13.2 3.2V8A6.6 2.8 0 0 1 0 8z" fill="#cfcfcf"/><path d="M0 5.5h13.2" stroke="#b4b4b4" stroke-width=".8"/><ellipse cx="6.6" cy="3.2" rx="6.6" ry="2.8" fill="#f0f0f0" stroke="#c0c0c0" stroke-width=".5"/><path d="M9 4.6Q10 1.1 13.5 1.2Q16.5 1.6 16.4 4.6V7.6Q16 10 13 10.7Q10 10.5 9.2 8z" fill="#8e8e8e"/><path d="M10.4 5.2Q11.4 3 13.8 3.2Q15.4 3.6 15.3 5.2Q14 4.2 12.6 4.7Q11.2 5.4 11 7.2Q10.3 6.2 10.4 5.2z" fill="#505050"/></g>
<use href="#fold" x="25.6" y="259.4"/>
</svg>
<span class="t" style="left:46.5px;top:132px;color:#000;letter-spacing:0.48px;">Группы (1)</span>
<span class="t" style="left:66.0px;top:150px;color:#000;letter-spacing:0.66px;">По умолчанию</span>
<span class="t" style="left:85.2px;top:168px;color:#000;letter-spacing:0.17px;">Поисковые фразы (25)</span>
<span class="t" style="left:85.2px;top:186px;color:#000;letter-spacing:0.08px;">Цели (1)</span>
<span class="t" style="left:85.2px;top:204px;color:#000;letter-spacing:0.44px;">Источники (1)</span>
<span class="t" style="left:85.2px;top:222px;color:#000;letter-spacing:0.25px;">Показатели</span>
<span class="t" style="left:85.8px;top:240px;color:#000;letter-spacing:0.23px;">Статистика (Отключено)</span>
<span class="t" style="left:47.5px;top:258px;color:#000;letter-spacing:0.44px;">Атрибуты</span>
<div class="a" style="left:294px;top:129px;width:560px;height:520px;border:1px solid #8c8e93;background:#fff"></div>
<div class="a" style="left:296px;top:106px;width:120px;height:23px;border:1px solid #8c8e93;border-bottom:none;background:linear-gradient(180deg,#f0f0f0 0,#e9e9e9 45%,#e0e0e0 55%,#dadada 100%);box-sizing:border-box"></div>
<div class="a" style="left:528px;top:106px;width:112px;height:23px;border:1px solid #8c8e93;border-bottom:none;background:linear-gradient(180deg,#f0f0f0 0,#e9e9e9 45%,#e0e0e0 55%,#dadada 100%);box-sizing:border-box"></div>
<div class="a" style="left:416px;top:104px;width:113px;height:26px;border:1px solid #8c8e93;border-bottom:none;background:#fff;box-sizing:border-box"></div>
<span class="t" style="left:302.2px;top:110px;color:#000;letter-spacing:-0.01px;">Стартовая страница</span>
<span class="t" style="left:424.2px;top:109px;color:#000;letter-spacing:0.29px;">Сводка по группе</span>
<span class="t" style="left:533.2px;top:110px;color:#000;letter-spacing:0.19px;">Сводка по проекту</span>
<div class="a" style="left:298px;top:137px;width:560px;height:19px;border:1px solid #bababa;border-radius:3px;background:linear-gradient(180deg,#fcfcfc 0,#f2f2f2 46%,#e7e7e7 54%,#ebebeb 100%)"></div>
<span class="t" style="left:304.1px;top:140px;color:#000;letter-spacing:0.29px;">Текущие позиции поисковых фраз</span>
<div class="a" style="left:298px;top:162px;width:560px;height:38px;background:#a0a0a0;border-left:1px solid #858585;border-top:1px solid #8a8a8a;box-sizing:border-box"></div>
<span class="t d" style="left:306.5px;top:175px;color:#dcdcdc;letter-spacing:0.39px;">Для группировки по колонке перетащите мышью сюда ее заголовок</span>
<div class="a" style="left:298px;top:200px;width:435px;height:19px;background:linear-gradient(180deg,#ffffff 0,#f7f7f7 60%,#ebebeb 100%)"></div>
<div class="a" style="left:298px;top:200px;width:1px;height:440px;background:#868686"></div>
<svg style="left:302px;top:204px" width="7" height="10" viewBox="0 0 7 10"><path d="M.5 1.5h1M.5 3.5h1M.5 5.5h1M.5 7.5h1M.5 9.5h1" stroke="#000" stroke-width="1"/><path d="M2.5 1.5H6M2.5 3.5H6M2.5 5.5H6M2.5 7.5H6M2.5 9.5H6" stroke="#111" stroke-width="1"/></svg>
<span class="t d" style="left:313.1px;top:203px;color:#000;letter-spacing:0.52px;">Поисковая фраза</span>
<span class="t d" style="left:512.6px;top:203px;color:#000;letter-spacing:0.86px;">Динамика</span>
<span class="t d" style="left:654.2px;top:203px;color:#000;letter-spacing:0.32px;">google (</span>
<div class="a" style="left:494px;top:202px;width:13px;height:13px;border:1px solid #6a6a6a;background:linear-gradient(180deg,#fdfdfd,#e3e3e3)"></div><svg style="left:497.5px;top:208.5px" width="8" height="4" viewBox="0 0 8 4"><path d="M0 0H8L4 4z" fill="#000"/></svg>
<div class="a" style="left:616px;top:202px;width:13px;height:13px;border:1px solid #6a6a6a;background:linear-gradient(180deg,#fdfdfd,#e3e3e3)"></div><svg style="left:619.5px;top:208.5px" width="8" height="4" viewBox="0 0 8 4"><path d="M0 0H8L4 4z" fill="#000"/></svg>
<div class="a" style="left:716px;top:202px;width:13px;height:13px;border:1px solid #6a6a6a;background:linear-gradient(180deg,#fdfdfd,#e3e3e3)"></div><svg style="left:719.5px;top:208.5px" width="8" height="4" viewBox="0 0 8 4"><path d="M0 0H8L4 4z" fill="#000"/></svg>
<svg style="left:635px;top:201px" width="16" height="16" viewBox="0 0 16 16"><clipPath id="gi"><rect width="16" height="16" rx="2.2"/></clipPath><g clip-path="url(#gi)"><rect width="16" height="16" fill="#3a9e3a"/><path d="M0 0H7.6V7L6 9.4H0z" fill="#2f62c8"/><path d="M7.6 0H16V5.6H7.6z" fill="#e3362c"/><path d="M7.6 5.6H16V16H7.2L6 9.4L7.6 7z" fill="#3fa53c"/><path d="M0 9.4H6L7.2 16H0z" fill="#f4bc1c"/><path d="M7.6 0V7" stroke="#fff" stroke-width=".5" opacity=".5"/></g><ellipse cx="4.4" cy="3.9" rx="1.9" ry="2.1" fill="none" stroke="#fff" stroke-width="1.5"/><path d="M5.6 5.6Q3.2 7 5 8.4Q7.6 9.6 6.6 11.4Q5.4 13 3 12.2Q1.6 11.2 3 10" fill="none" stroke="#fff" stroke-width="1.4" stroke-linecap="round"/></svg>
<svg style="left:705px;top:205.5px" width="8" height="8" viewBox="0 0 8 8"><path d="M3.7 .8L7 7.2H.5z" fill="#fff" stroke="#b4b4b4" stroke-width=".9"/></svg>
<div class="a" style="left:299px;top:219px;width:11px;height:20px;background:#bfdcf5"></div>
<div class="a" style="left:310px;top:219px;width:322px;height:20px;background:#3399ff"></div>
<div class="a" style="left:632px;top:219px;width:101px;height:20px;background:#5370ab;outline:1px dotted rgba(225,220,190,.6);outline-offset:-1px"></div>
<div class="a" style="left:510px;top:219px;width:1px;height:20px;background:#8fa8c8"></div>
<svg style="left:302.6px;top:224px" width="6" height="9" viewBox="0 0 6 9"><path d="M.8 .9L4.7 4.5.8 8.1z" fill="#dfeefb" stroke="#000" stroke-width="1.25" stroke-linejoin="miter"/></svg>
<div class="a" style="left:299px;top:239px;width:434px;height:1px;background:#a6a6a6"></div>
<span class="t d" style="left:313.0px;top:222px;color:#fff;letter-spacing:0.31px;">харьков турагенства</span>
<span class="t d" style="left:605.4px;top:222px;color:#fff;letter-spacing:0.98px;">0,00</span>
<span class="t d" style="left:635.0px;top:222px;color:#fff;font-weight:bold;">2</span>
<span class="t d" style="left:724.5px;top:222px;color:#fff;">s</span>
<div class="a" style="left:299px;top:240px;width:11px;height:20px;background:#f0f0f0"></div>
<div class="a" style="left:310px;top:240px;width:422px;height:20px;background:#f7f7f7"></div>
<div class="a" style="left:510px;top:240px;width:1px;height:20px;background:#a0a0a0"></div>
<div class="a" style="left:632px;top:240px;width:1px;height:20px;background:#a0a0a0"></div>
<div class="a" style="left:732px;top:240px;width:1px;height:20px;background:#a0a0a0"></div>
<div class="a" style="left:299px;top:260px;width:434px;height:1px;background:#a6a6a6"></div>
<span class="t d" style="left:313.2px;top:243px;color:#000;letter-spacing:0.46px;">туроператоры харьков</span>
<span class="t d" style="left:605.4px;top:243px;color:#000;letter-spacing:0.98px;">0,00</span>
<span class="t d" style="left:635.0px;top:243px;color:#000;font-weight:bold;">5</span>
<span class="t d" style="left:724.5px;top:243px;color:#2a7fd0;">s</span>
<div class="a" style="left:299px;top:261px;width:11px;height:20px;background:#f0f0f0"></div>
<div class="a" style="left:310px;top:261px;width:422px;height:20px;background:#ffffff"></div>
<div class="a" style="left:510px;top:261px;width:1px;height:20px;background:#a0a0a0"></div>
<div class="a" style="left:632px;top:261px;width:1px;height:20px;background:#a0a0a0"></div>
<div class="a" style="left:732px;top:261px;width:1px;height:20px;background:#a0a0a0"></div>
<div class="a" style="left:299px;top:281px;width:434px;height:1px;background:#a6a6a6"></div>
<span class="t d" style="left:313.2px;top:264px;color:#000;letter-spacing:0.28px;">турагентства харькова</span>
<span class="t d" style="left:605.4px;top:264px;color:#000;letter-spacing:0.98px;">0,00</span>
<span class="t d" style="left:635.0px;top:264px;color:#000;font-weight:bold;">5</span>
<span class="t d" style="left:715.9px;top:264px;color:#9a9a9a;letter-spacing:1.35px;">B3</span>
<div class="a" style="left:299px;top:282px;width:11px;height:20px;background:#f0f0f0"></div>
<div class="a" style="left:310px;top:282px;width:422px;height:20px;background:#f7f7f7"></div>
<div class="a" style="left:510px;top:282px;width:1px;height:20px;background:#a0a0a0"></div>
<div class="a" style="left:632px;top:282px;width:1px;height:20px;background:#a0a0a0"></div>
<div class="a" style="left:732px;top:282px;width:1px;height:20px;background:#a0a0a0"></div>
<div class="a" style="left:299px;top:302px;width:434px;height:1px;background:#a6a6a6"></div>
<span class="t d" style="left:313.2px;top:285px;color:#000;letter-spacing:0.25px;">турагентство харьков</span>
<span class="t d" style="left:605.4px;top:285px;color:#000;letter-spacing:0.98px;">0,00</span>
<span class="t d" style="left:635.0px;top:285px;color:#000;font-weight:bold;">7</span>
<span class="t d" style="left:724.5px;top:285px;color:#2a7fd0;">s</span>
<div class="a" style="left:299px;top:303px;width:11px;height:20px;background:#f0f0f0"></div>
<div class="a" style="left:310px;top:303px;width:422px;height:20px;background:#ffffff"></div>
<div class="a" style="left:510px;top:303px;width:1px;height:20px;background:#a0a0a0"></div>
<div class="a" style="left:632px;top:303px;width:1px;height:20px;background:#a0a0a0"></div>
<div class="a" style="left:732px;top:303px;width:1px;height:20px;background:#a0a0a0"></div>
<div class="a" style="left:299px;top:323px;width:434px;height:1px;background:#a6a6a6"></div>
<span class="t d" style="left:313.2px;top:306px;color:#000;letter-spacing:0.35px;">туристические фирмы харькова</span>
<span class="t d" style="left:605.4px;top:306px;color:#000;letter-spacing:0.98px;">0,00</span>
<span class="t d" style="left:635.3px;top:306px;color:#000;font-weight:bold;">8</span>
<span class="t d" style="left:715.9px;top:306px;color:#9a9a9a;letter-spacing:1.10px;">B6</span>
<div class="a" style="left:299px;top:324px;width:11px;height:20px;background:#f0f0f0"></div>
<div class="a" style="left:310px;top:324px;width:422px;height:20px;background:#f7f7f7"></div>
<div class="a" style="left:510px;top:324px;width:1px;height:20px;background:#a0a0a0"></div>
<div class="a" style="left:632px;top:324px;width:1px;height:20px;background:#a0a0a0"></div>
<div class="a" style="left:732px;top:324px;width:1px;height:20px;background:#a0a0a0"></div>
<div class="a" style="left:299px;top:344px;width:434px;height:1px;background:#a6a6a6"></div>
<span class="t d" style="left:313.2px;top:327px;color:#000;letter-spacing:0.48px;">турфирмы харькова</span>
<span class="t d" style="left:605.4px;top:327px;color:#000;letter-spacing:0.98px;">0,00</span>
<span class="t d" style="left:635.3px;top:327px;color:#000;font-weight:bold;">8</span>
<div class="a" style="left:299px;top:345px;width:11px;height:20px;background:#f0f0f0"></div>
<div class="a" style="left:310px;top:345px;width:422px;height:20px;background:#ffffff"></div>
<div class="a" style="left:510px;top:345px;width:1px;height:20px;background:#a0a0a0"></div>
<div class="a" style="left:632px;top:345px;width:1px;height:20px;background:#a0a0a0"></div>
<div class="a" style="left:732px;top:345px;width:1px;height:20px;background:#a0a0a0"></div>
<div class="a" style="left:299px;top:365px;width:434px;height:1px;background:#a6a6a6"></div>
<span class="t d" style="left:313.0px;top:348px;color:#000;letter-spacing:0.32px;">харьков турагенство</span>
<span class="t d" style="left:605.4px;top:348px;color:#000;letter-spacing:0.98px;">0,00</span>
<span class="t d" style="left:635.3px;top:348px;color:#000;font-weight:bold;">8</span>
<span class="t d" style="left:715.9px;top:348px;color:#9a9a9a;letter-spacing:1.10px;">B4</span>
<div class="a" style="left:299px;top:366px;width:11px;height:20px;background:#f0f0f0"></div>
<div class="a" style="left:310px;top:366px;width:422px;height:20px;background:#f7f7f7"></div>
<div class="a" style="left:510px;top:366px;width:1px;height:20px;background:#a0a0a0"></div>
<div class="a" style="left:632px;top:366px;width:1px;height:20px;background:#a0a0a0"></div>
<div class="a" style="left:732px;top:366px;width:1px;height:20px;background:#a0a0a0"></div>
<div class="a" style="left:299px;top:386px;width:434px;height:1px;background:#a6a6a6"></div>
<span class="t d" style="left:312.5px;top:369px;color:#000;letter-spacing:0.35px;">горящие путевки из харькова</span>
<span class="t d" style="left:605.4px;top:369px;color:#000;letter-spacing:0.98px;">0,00</span>
<span class="t d" style="left:635.3px;top:369px;color:#000;font-weight:bold;">8</span>
<div class="a" style="left:299px;top:387px;width:11px;height:20px;background:#f0f0f0"></div>
<div class="a" style="left:310px;top:387px;width:422px;height:20px;background:#ffffff"></div>
<div class="a" style="left:510px;top:387px;width:1px;height:20px;background:#a0a0a0"></div>
<div class="a" style="left:632px;top:387px;width:1px;height:20px;background:#a0a0a0"></div>
<div class="a" style="left:732px;top:387px;width:1px;height:20px;background:#a0a0a0"></div>
<div class="a" style="left:299px;top:407px;width:434px;height:1px;background:#a6a6a6"></div>
<span class="t d" style="left:312.5px;top:390px;color:#000;letter-spacing:0.32px;">горящие путевки харьков</span>
<span class="t d" style="left:605.4px;top:390px;color:#000;letter-spacing:0.98px;">0,00</span>
<span class="t d" style="left:635.3px;top:390px;color:#000;font-weight:bold;">9</span>
<div class="a" style="left:299px;top:408px;width:11px;height:20px;background:#f0f0f0"></div>
<div class="a" style="left:310px;top:408px;width:422px;height:20px;background:#f7f7f7"></div>
<div class="a" style="left:510px;top:408px;width:1px;height:20px;background:#a0a0a0"></div>
<div class="a" style="left:632px;top:408px;width:1px;height:20px;background:#a0a0a0"></div>
<div class="a" style="left:732px;top:408px;width:1px;height:20px;background:#a0a0a0"></div>
<div class="a" style="left:299px;top:428px;width:434px;height:1px;background:#a6a6a6"></div>
<span class="t d" style="left:313.2px;top:411px;color:#000;letter-spacing:0.22px;">туристические агентства харьков</span>
<span class="t d" style="left:605.4px;top:411px;color:#000;letter-spacing:0.98px;">0,00</span>
<span class="t d" style="left:634.8px;top:411px;color:#000;letter-spacing:0.25px;font-weight:bold;">10</span>
<div class="a" style="left:299px;top:429px;width:11px;height:20px;background:#f0f0f0"></div>
<div class="a" style="left:310px;top:429px;width:422px;height:20px;background:#ffffff"></div>
<div class="a" style="left:510px;top:429px;width:1px;height:20px;background:#a0a0a0"></div>
<div class="a" style="left:632px;top:429px;width:1px;height:20px;background:#a0a0a0"></div>
<div class="a" style="left:732px;top:429px;width:1px;height:20px;background:#a0a0a0"></div>
<div class="a" style="left:299px;top:449px;width:434px;height:1px;background:#a6a6a6"></div>
<span class="t d" style="left:313.2px;top:432px;color:#000;letter-spacing:0.23px;">туристическое агентство харьков</span>
<span class="t d" style="left:605.4px;top:432px;color:#000;letter-spacing:0.98px;">0,00</span>
<span class="t d" style="left:634.8px;top:432px;color:#000;letter-spacing:0.25px;font-weight:bold;">10</span>
<span class="t d" style="left:715.9px;top:432px;color:#9a9a9a;letter-spacing:1.10px;">B9</span>
<div class="a" style="left:299px;top:450px;width:11px;height:20px;background:#f0f0f0"></div>
<div class="a" style="left:310px;top:450px;width:422px;height:20px;background:#f7f7f7"></div>
<div class="a" style="left:510px;top:450px;width:1px;height:20px;background:#a0a0a0"></div>
<div class="a" style="left:632px;top:450px;width:1px;height:20px;background:#a0a0a0"></div>
<div class="a" style="left:732px;top:450px;width:1px;height:20px;background:#a0a0a0"></div>
<div class="a" style="left:299px;top:470px;width:434px;height:1px;background:#a6a6a6"></div>
<span class="t d" style="left:313.2px;top:453px;color:#000;letter-spacing:0.40px;">туры из харькова</span>
<span class="t d" style="left:605.4px;top:453px;color:#000;letter-spacing:0.98px;">0,00</span>
<span class="t d" style="left:634.8px;top:453px;color:#000;letter-spacing:0.25px;font-weight:bold;">10</span>
<span class="t d" style="left:715.9px;top:453px;color:#9a9a9a;letter-spacing:1.10px;">B9</span>
<div class="a" style="left:299px;top:471px;width:11px;height:20px;background:#f0f0f0"></div>
<div class="a" style="left:310px;top:471px;width:422px;height:20px;background:#ffffff"></div>
<div class="a" style="left:510px;top:471px;width:1px;height:20px;background:#a0a0a0"></div>
<div class="a" style="left:632px;top:471px;width:1px;height:20px;background:#a0a0a0"></div>
<div class="a" style="left:732px;top:471px;width:1px;height:20px;background:#a0a0a0"></div>
<div class="a" style="left:299px;top:491px;width:434px;height:1px;background:#a6a6a6"></div>
<span class="t d" style="left:313.0px;top:474px;color:#000;letter-spacing:0.38px;">харьков горящие туры</span>
<span class="t d" style="left:605.4px;top:474px;color:#000;letter-spacing:0.98px;">0,00</span>
<span class="t d" style="left:634.8px;top:474px;color:#000;letter-spacing:0.25px;font-weight:bold;">10</span>
<div class="a" style="left:299px;top:492px;width:11px;height:20px;background:#f0f0f0"></div>
<div class="a" style="left:310px;top:492px;width:422px;height:20px;background:#f7f7f7"></div>
<div class="a" style="left:510px;top:492px;width:1px;height:20px;background:#a0a0a0"></div>
<div class="a" style="left:632px;top:492px;width:1px;height:20px;background:#a0a0a0"></div>
<div class="a" style="left:732px;top:492px;width:1px;height:20px;background:#a0a0a0"></div>
<div class="a" style="left:299px;top:512px;width:434px;height:1px;background:#a6a6a6"></div>
<span class="t d" style="left:313.0px;top:495px;color:#000;letter-spacing:0.32px;">харьков горящие путевки</span>
<span class="t d" style="left:605.4px;top:495px;color:#000;letter-spacing:0.98px;">0,00</span>
<span class="t d" style="left:634.8px;top:495px;color:#000;letter-spacing:0.25px;font-weight:bold;">10</span>
<span class="t d" style="left:724.5px;top:495px;color:#2a7fd0;">s</span>
<div class="a" style="left:299px;top:513px;width:11px;height:20px;background:#f0f0f0"></div>
<div class="a" style="left:310px;top:513px;width:422px;height:20px;background:#ffffff"></div>
<div class="a" style="left:510px;top:513px;width:1px;height:20px;background:#a0a0a0"></div>
<div class="a" style="left:632px;top:513px;width:1px;height:20px;background:#a0a0a0"></div>
<div class="a" style="left:732px;top:513px;width:1px;height:20px;background:#a0a0a0"></div>
<div class="a" style="left:299px;top:533px;width:434px;height:1px;background:#a6a6a6"></div>
<span class="t d" style="left:312.5px;top:516px;color:#000;letter-spacing:0.39px;">горящие туры харьков</span>
<span class="t d" style="left:605.4px;top:516px;color:#000;letter-spacing:0.98px;">0,00</span>
<span class="t d" style="left:634.8px;top:516px;color:#000;letter-spacing:0.25px;font-weight:bold;">10</span>
<div class="a" style="left:299px;top:534px;width:11px;height:20px;background:#f0f0f0"></div>
<div class="a" style="left:310px;top:534px;width:422px;height:20px;background:#f7f7f7"></div>
<div class="a" style="left:510px;top:534px;width:1px;height:20px;background:#a0a0a0"></div>
<div class="a" style="left:632px;top:534px;width:1px;height:20px;background:#a0a0a0"></div>
<div class="a" style="left:732px;top:534px;width:1px;height:20px;background:#a0a0a0"></div>
<div class="a" style="left:299px;top:554px;width:434px;height:1px;background:#a6a6a6"></div>
<span class="t d" style="left:313.2px;top:537px;color:#000;letter-spacing:0.23px;">туристические агентства харькова</span>
<span class="t d" style="left:605.4px;top:537px;color:#000;letter-spacing:0.98px;">0,00</span>
<span class="t d" style="left:634.8px;top:537px;color:#000;letter-spacing:0.50px;font-weight:bold;">11</span>
<span class="t d" style="left:708.3px;top:537px;color:#9a9a9a;letter-spacing:1.22px;">B10</span>
<div class="a" style="left:299px;top:555px;width:11px;height:20px;background:#f0f0f0"></div>
<div class="a" style="left:310px;top:555px;width:422px;height:20px;background:#ffffff"></div>
<div class="a" style="left:510px;top:555px;width:1px;height:20px;background:#a0a0a0"></div>
<div class="a" style="left:632px;top:555px;width:1px;height:20px;background:#a0a0a0"></div>
<div class="a" style="left:732px;top:555px;width:1px;height:20px;background:#a0a0a0"></div>
<div class="a" style="left:299px;top:575px;width:434px;height:1px;background:#a6a6a6"></div>
<span class="t d" style="left:312.5px;top:558px;color:#000;letter-spacing:0.41px;">горящие туры из харькова</span>
<span class="t d" style="left:605.4px;top:558px;color:#000;letter-spacing:0.98px;">0,00</span>
<span class="t d" style="left:634.8px;top:558px;color:#000;letter-spacing:0.50px;font-weight:bold;">11</span>
<span class="t d" style="left:708.3px;top:558px;color:#9a9a9a;letter-spacing:1.22px;">B10</span>
<div class="a" style="left:299px;top:576px;width:11px;height:20px;background:#f0f0f0"></div>
<div class="a" style="left:310px;top:576px;width:422px;height:20px;background:#f7f7f7"></div>
<div class="a" style="left:510px;top:576px;width:1px;height:20px;background:#a0a0a0"></div>
<div class="a" style="left:632px;top:576px;width:1px;height:20px;background:#a0a0a0"></div>
<div class="a" style="left:732px;top:576px;width:1px;height:20px;background:#a0a0a0"></div>
<div class="a" style="left:299px;top:596px;width:434px;height:1px;background:#a6a6a6"></div>
<span class="t d" style="left:312.5px;top:579px;color:#000;letter-spacing:0.22px;">путевки в египет из харькова</span>
<span class="t d" style="left:605.4px;top:579px;color:#000;letter-spacing:0.98px;">0,00</span>
<span class="t d" style="left:634.8px;top:579px;color:#000;letter-spacing:0.50px;font-weight:bold;">17</span>
<span class="t d" style="left:708.3px;top:579px;color:#9a9a9a;letter-spacing:1.22px;">B16</span>
<div class="a" style="left:299px;top:597px;width:11px;height:20px;background:#f0f0f0"></div>
<div class="a" style="left:310px;top:597px;width:422px;height:20px;background:#ffffff"></div>
<div class="a" style="left:510px;top:597px;width:1px;height:20px;background:#a0a0a0"></div>
<div class="a" style="left:632px;top:597px;width:1px;height:20px;background:#a0a0a0"></div>
<div class="a" style="left:732px;top:597px;width:1px;height:20px;background:#a0a0a0"></div>
<div class="a" style="left:299px;top:617px;width:434px;height:1px;background:#a6a6a6"></div>
<span class="t d" style="left:312.5px;top:600px;color:#000;letter-spacing:0.27px;">путевки в турцию из харькова</span>
<span class="t d" style="left:605.4px;top:600px;color:#000;letter-spacing:0.98px;">0,00</span>
<span class="t d" style="left:634.8px;top:600px;color:#000;letter-spacing:0.25px;font-weight:bold;">18</span>
<div class="a" style="left:299px;top:618px;width:11px;height:20px;background:#f0f0f0"></div>
<div class="a" style="left:310px;top:618px;width:422px;height:20px;background:#f7f7f7"></div>
<div class="a" style="left:510px;top:618px;width:1px;height:20px;background:#a0a0a0"></div>
<div class="a" style="left:632px;top:618px;width:1px;height:20px;background:#a0a0a0"></div>
<div class="a" style="left:732px;top:618px;width:1px;height:20px;background:#a0a0a0"></div>
<div class="a" style="left:299px;top:638px;width:434px;height:1px;background:#a6a6a6"></div>
<span class="t d" style="left:312.5px;top:621px;color:#000;letter-spacing:0.25px;">путевки в грецию из харькова</span>
<span class="t d" style="left:605.4px;top:621px;color:#000;letter-spacing:0.98px;">0,00</span>
<span class="t d" style="left:634.8px;top:621px;color:#000;letter-spacing:0.25px;font-weight:bold;">19</span>
</body></html>
